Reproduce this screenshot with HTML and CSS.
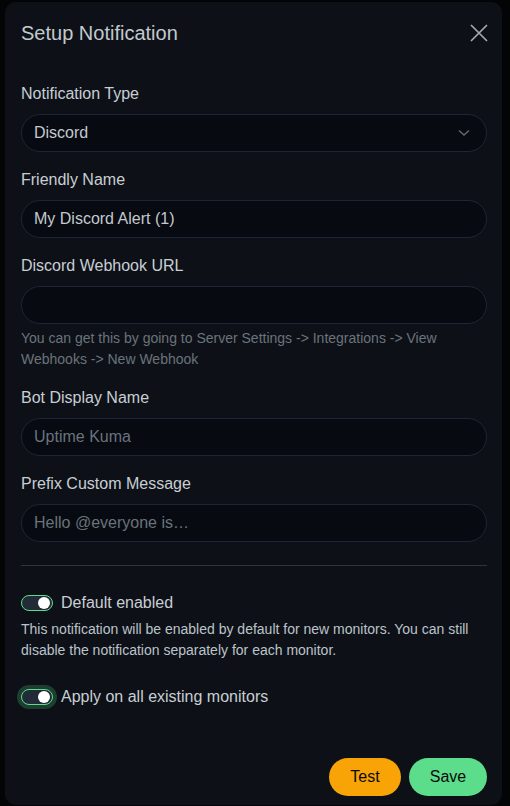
FILE: index.html
```html
<!DOCTYPE html>
<html lang="en">
<head>
<meta charset="utf-8">
<title>Setup Notification</title>
<link rel="stylesheet" href="styles.css">
</head>
<body>
<div class="backdrop">
  <div class="modal">
    <div class="modal-header">
      <h5 class="modal-title">Setup Notification</h5>
      <button class="close" aria-label="Close">
        <svg width="18" height="18" viewBox="0 0 18 18"><path d="M1 1 L17 17 M17 1 L1 17" stroke="#a3aab1" stroke-width="1.7" fill="none"/></svg>
      </button>
    </div>
    <div class="modal-body">
      <div class="field">
        <label class="form-label">Notification Type</label>
        <div class="select">
          <span>Discord</span>
          <svg class="chev" width="12" height="8" viewBox="0 0 12 8"><path d="M1 1.5 L6 6 L11 1.5" stroke="#5f6770" stroke-width="1.5" fill="none"/></svg>
        </div>
      </div>
      <div class="field">
        <label class="form-label">Friendly Name</label>
        <div class="input"><span>My Discord Alert (1)</span></div>
      </div>
      <div class="field">
        <label class="form-label">Discord Webhook URL</label>
        <div class="input"></div>
        <div class="form-text">You can get this by going to Server Settings -&gt; Integrations -&gt; View Webhooks -&gt; New Webhook</div>
      </div>
      <div class="field">
        <label class="form-label">Bot Display Name</label>
        <div class="input"><span class="ph">Uptime Kuma</span></div>
      </div>
      <div class="field last">
        <label class="form-label">Prefix Custom Message</label>
        <div class="input"><span class="ph">Hello @everyone is…</span></div>
      </div>
      <hr class="divider">
      <div class="check first">
        <span class="switch"><span class="knob"></span></span>
        <span class="check-label">Default enabled</span>
      </div>
      <div class="check-text">This notification will be enabled by default for new monitors. You can still disable the notification separately for each monitor.</div>
      <div class="check second">
        <span class="switch focus"><span class="knob"></span></span>
        <span class="check-label">Apply on all existing monitors</span>
      </div>
    </div>
    <div class="modal-footer">
      <button class="btn btn-warning">Test</button>
      <button class="btn btn-primary">Save</button>
    </div>
  </div>
</div>
</body>
</html>
```

FILE: styles.css
```css
* { box-sizing: border-box; }
html, body { margin: 0; padding: 0; }
body {
  background: #030405;
  font-family: "Liberation Sans", Arial, sans-serif;
  color: #c3c9cf;
  width: 510px;
  height: 806px;
  overflow: hidden;
}
.backdrop {
  padding: 2px 8px 0 5px;
}
.modal {
  width: 497px;
  height: 803px;
  background: #0d1117;
  border-radius: 11px;
  display: flex;
  flex-direction: column;
}
.modal-header {
  display: flex;
  align-items: center;
  justify-content: space-between;
  padding: 16px 14px 16px 16px;
  height: 62px;
}
.modal-title {
  margin: 0;
  font-size: 20px;
  line-height: 30px;
  font-weight: 400;
  color: #c3c9cf;
}
.close {
  background: none;
  border: 0;
  padding: 0;
  width: 18px;
  height: 18px;
  margin-top: 0;
  display: flex;
}
.modal-body {
  padding: 18px 15px 0 16px;
}
.field { margin-bottom: 16px; }
.field.last { margin-bottom: 0; }
.form-label {
  display: block;
  font-size: 16px;
  line-height: 24px;
  margin-bottom: 8px;
  color: #c8ced4;
}
.select, .input {
  height: 38px;
  border: 1px solid #1d2634;
  background: #070a10;
  border-radius: 19px;
  padding: 0 12px;
  display: flex;
  align-items: center;
  font-size: 16px;
  color: #c3c9cf;
}
.select { justify-content: space-between; padding-right: 16px; }
.ph { color: #6a737c; }
.form-text {
  margin-top: 4px;
  font-size: 14px;
  line-height: 21px;
  color: #6b737b;
}
.divider {
  margin: 23px 0 0;
  border: 0;
  border-top: 1px solid #2e343b;
  height: 0;
}
.check {
  display: flex;
  align-items: center;
  height: 24px;
}
.check.first { margin-top: 25px; }
.check.second { margin-top: 24px; }
.switch {
  width: 32px;
  height: 16px;
  border: 1px solid #5cdd8b;
  border-radius: 8px;
  background: #222c38;
  position: relative;
  margin-right: 8px;
  flex: none;
}
.switch.focus {
  box-shadow: 0 0 0 4px rgba(92, 221, 139, 0.22);
}
.knob {
  position: absolute;
  right: 2px;
  top: 1px;
  width: 12px;
  height: 12px;
  border-radius: 50%;
  background: #ffffff;
}
.check-label {
  font-size: 16px;
  line-height: 24px;
  color: #c8ced4;
}
.check-text {
  margin-top: 4px;
  font-size: 14px;
  line-height: 21px;
  color: #bcc3ca;
}
.modal-footer {
  margin-top: auto;
  display: flex;
  justify-content: flex-end;
  gap: 8px;
  padding: 0 15px 9px 16px;
}
.btn {
  height: 38px;
  border-radius: 19px;
  border: 0;
  font-family: "Liberation Sans", Arial, sans-serif;
  font-size: 16px;
  color: #0a0a0a;
  padding: 0 20px;
}
.btn-warning { background: #f8a306; width: 72px; }
.btn-primary { background: #5cdd8b; width: 78px; }
```
